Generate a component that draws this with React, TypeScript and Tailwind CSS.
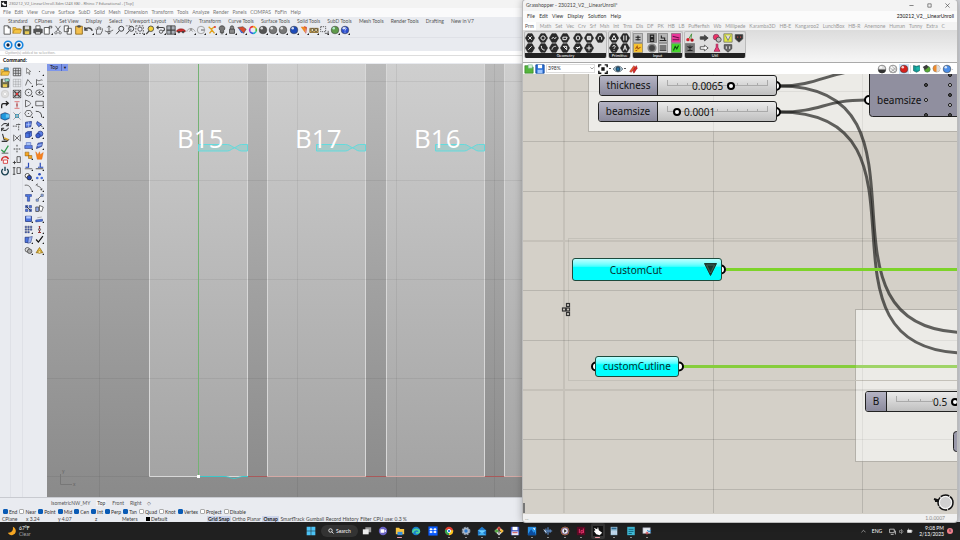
import React from 'react';
import clsx from 'clsx';

type Shape = React.ReactNode;

function Ico({ children, className = 'size-[10px]' }: { children: Shape; className?: string }) {
  return (
    <svg viewBox="0 0 12 12" className={clsx('block shrink-0', className)} fill="none" stroke="#444" strokeWidth="1" aria-hidden="true">
      {children}
    </svg>
  );
}

const corner = <path d="M12 9.500V12H9.500z" fill="#222" stroke="none" />;

function ball(fill: string, shine = '#fff'): Shape {
  return (
    <>
      <circle cx="6" cy="6" r="4.600" fill={fill} stroke="#333" strokeWidth=".6" />
      <circle cx="4.500" cy="4" r="1.500" fill={shine} stroke="none" opacity=".8" />
    </>
  );
}

const newDoc = <path d="M2.500 1h5l2.500 2.500V11h-7.500zM7.500 1v2.500H10" fill="#fff" />;
const folder = <path d="M1 10V3h3.500l1 1.500H10V6M1 10l2-4.500h8.500L10 10z" fill="#f5c443" stroke="#a87a1c" strokeWidth=".7" />;
const floppy = (
  <>
    <path d="M1.500 1.500h9v9.500h-9z" fill="#6b6b4a" stroke="#333" />
    <path d="M3.500 1.500h5v3.500h-5z" fill="#ddd" stroke="none" />
    <path d="M3.500 7.500h5V11h-5z" fill="#e8cb55" stroke="none" />
  </>
);
const printer = (
  <>
    <path d="M3.500 1h5v4h-5z" fill="#fff" />
    <path d="M1 5h10v4.500H1z" fill="#555" />
    <path d="M3 8h6v3H3z" fill="#ddd" />
  </>
);
const magnifier = <path d="M5 7 1.500 11M4.500 4.500a3 3 0 1 0 6 0a3 3 0 1 0-6 0" fill="#e8ecf4" strokeWidth="1.200" />;
const gridShape = <path d="M1.500 1.500h9v9h-9zM1.500 4.500h9M1.500 7.500h9M4.500 1.500v9M7.500 1.500v9" strokeWidth=".9" />;

const mainTools: Shape[] = [
  newDoc,
  folder,
  floppy,
  printer,
  <><path d="M1.500 3h6v8h-6z" fill="#fff" /><path d="M7.500 5V1.500h3M9 3.500h1.500v-2" />{corner}</>,
  <path d="M3 1l5 7M9 1L4 8M3.500 8a1.400 1.400 0 1 0 .1 0M8.500 8a1.400 1.400 0 1 0 .1 0" stroke="#555" />,
  <path d="M1.500 1h5v7h-5zM5 4h5v7H5z" fill="#fff" />,
  <><path d="M2 1.500h8V11H2z" fill="#f4c04e" stroke="#8a6514" /><path d="M4.500 1h3v1.500h-3z" fill="#666" /></>,
  <><path d="M1 6c2-3 7-4 9 1M1 2.500V6h3.500" strokeWidth="1.500" />{corner}</>,
  <path d="M3 11V6L2 4.500M4 6V2.500M6 5.500V1.500M8 6V2.500M10 7V4M3 11h5l2-4" strokeWidth=".9" />,
  <path d="M6 1v10M1 7c3 2 7 1 10-1M4 3l2-2 2 2M4 9l2 2 2-2" strokeWidth=".9" />,
  magnifier,
  <>{magnifier}<path d="M1 1h6v5" strokeDasharray="1 1" />{corner}</>,
  <><path d="M1 1h9v9H1z" strokeDasharray="2 1.500" /><circle cx="6" cy="5" r="2.500" fill="#eef" />{corner}</>,
  <><path d="M5 7 1.500 11" strokeWidth="1.500" /><circle cx="7" cy="4.500" r="3.300" fill="#f6d237" />{corner}</>,
  <><path d="M1 3h7c3 0 3 4 0 4M3 1 1 3l2 2" strokeWidth="1.300" /><circle cx="6" cy="8" r="2" />{corner}</>,
  <><path d="M1 1h10v10H1z" fill="#aab0b8" /><path d="M6 1v10M1 6h10" strokeWidth="1.500" />{corner}</>,
  <><path d="M1 7c1-3 9-3 10 0v1H1z" fill="#d32f2f" stroke="#8a1c1c" /><circle cx="3.500" cy="8.500" r="1" fill="#222" /><circle cx="8.500" cy="8.500" r="1" fill="#222" /></>,
  <><path d="M1 8c1-5 8-5 10 0M4 8c0-2 4-2 4 0" stroke="#999" /><circle cx="6" cy="5" r="1" fill="#888" stroke="#999" />{corner}</>,
  <><circle cx="6" cy="6" r="4.500" stroke="#999" /><path d="M6 6h4" />{corner}</>,
  <><path d="M2 2l3 3 4-3M3 10l3-4 3 4" stroke="#e2a31c" strokeWidth="1.600" /><circle cx="9.500" cy="2.500" r="1.200" fill="#d33" stroke="none" />{corner}</>,
  <><path d="M6 1a3 3 0 0 1 2 5.500V9H4V6.500A3 3 0 0 1 6 1z" fill="#777" /><path d="M4.500 10.500h3" />{corner}</>,
  <><path d="M3 5h6v5H3zM4 5V3a2 2 0 0 1 4 0v2" fill="#888" />{corner}</>,
  <><path d="M1 3l6-1 4 3-3 5z" fill="#d94d30" stroke="#333" strokeWidth=".6" /><path d="M1 3l7 7-3-.5z" fill="#3a62c8" stroke="none" />{corner}</>,
  <>
    <path d="M6 2a4 4 0 0 1 3.500 2" stroke="#f5a623" strokeWidth="2" /><path d="M9.500 4a4 4 0 0 1 0 4" stroke="#44c13c" strokeWidth="2" />
    <path d="M9.500 8A4 4 0 0 1 6 10" stroke="#21b7c9" strokeWidth="2" /><path d="M6 10a4 4 0 0 1-3.500-2" stroke="#3451e0" strokeWidth="2" />
    <path d="M2.500 8a4 4 0 0 1 0-4" stroke="#b731d8" strokeWidth="2" /><path d="M2.500 4A4 4 0 0 1 6 2" stroke="#e8362e" strokeWidth="2" />
  </>,
  <>{ball('#555')}{corner}</>,
  <>{ball('#777')}{corner}</>,
  <>{ball('#777')}{corner}</>,
  <>{ball('#1e4bb8')}{corner}</>,
  <><path d="M2 2h7l-2 7z" fill="#f08a24" stroke="none" /><path d="M6 2l3 1-1 7" stroke="#c33" />{corner}</>,
  <><path d="M1 4h10v5H1z" fill="#e0b04a" stroke="#6b4d13" strokeWidth=".8" /><circle cx="4" cy="6" r="1.800" fill="#f7e3a8" /><circle cx="8.500" cy="6" r="1.800" fill="#f7e3a8" />{corner}</>,
  <><path d="M2 2h6v6H2z" strokeDasharray="1.500 1" /><path d="M7 10h4V7" />{corner}</>,
  <>{ball('#5f9a4a', '#cfe')}{corner}</>,
  <>{ball('#2c4fd0')}<path d="M4.800 4.500c0-2 2.800-1.600 2.500 0-.1 1-1.300 1-1.300 2.200M6 8v1" stroke="#fff" />{corner}</>,
];

const blueBox = <path d="M2 4l3-2h5v6l-3 2H2zM2 4h5v6M7 4l3-2" fill="#4b74e0" stroke="#1c2f80" strokeWidth=".8" />;

const sideOne: Shape[] = [
  <>{folder}<path d="M5 1h5v3H5z" fill="#58b4e8" stroke="#246" strokeWidth=".6" /></>,
  <>{floppy}<path d="M6 1h5v3H6z" fill="#9ec" stroke="#345" strokeWidth=".6" /></>,
  <><circle cx="6" cy="6" r="4.500" fill="#ddd" stroke="#ccc" /><path d="M4.500 4.500l3 3M7.500 4.500l-3 3" stroke="#fff" /></>,
  <path d="M2 10V6.500C2 4 4 4 9 4M7 1.500 10 4 7 6.500" stroke="#222" strokeWidth="1.500" />,
  <><path d="M1 4l5-2 5 2v5l-5 2-5-2z" fill="#1f97dc" stroke="#125" strokeWidth=".7" /><path d="M7 4h4v4H7z" fill="#63c5f2" stroke="none" /></>,
  <path d="M2 5c1-4 7-4 8-1M10 7c-1 4-7 4-8 1M10 1v3.500H7M2 11V7.500h3" stroke="#222" strokeWidth="1.200" />,
  <><path d="M3 1l2 7h5l-2 2H2" stroke="#333" strokeWidth="1.300" /><path d="M5 6l5 2" stroke="#dca62b" strokeWidth="2" /></>,
  <><path d="M1.500 7 5 10l5-8" stroke="#2f9a4b" strokeWidth="1.500" /><path d="M2 11h8" stroke="#444" /></>,
  <><path d="M2 7c0-6 7-6 8-2" stroke="#d22f2f" strokeWidth="1.800" /><path d="M4 6h5v4H4z" fill="#fff" stroke="#d22f2f" /></>,
  <><path d="M3.500 3.500a4 4 0 1 0 5 0M6 1v5" stroke="#143c4c" strokeWidth="1.600" /></>,
];

const sideTwo: Shape[] = [
  gridShape,
  <g opacity=".3">{gridShape}</g>,
  <>{gridShape}<path d="M1.500 1.500l9 9M10.500 1.500l-9 9" stroke="#333" /><circle cx="6" cy="6" r="1.500" fill="#d33" stroke="none" /></>,
  <><path d="M3 2h6M3 10h6" stroke="#d66" /><path d="M6 3v6M5 6h2" stroke="#a33" /></>,
  <><path d="M2 2l8 8M10 2l-8 8" strokeDasharray="1.500 1" /><circle cx="6" cy="6" r="2" stroke="#2d9cc0" /></>,
  <path d="M1 5h6M8 2v9M5 3h5" strokeDasharray="2 1" />,
  <path d="M2 2v8M10 2v8M3 3l6 6M9 3 3 9" strokeWidth=".9" />,
  <path d="M6 1v3M6 8v3M2 6h8" strokeDasharray="2 1" strokeWidth="1.200" />,
  <><path d="M6 2h4v7H6z" /><path d="M1 9h4M3 7v4" stroke="#333" /></>,
  <><path d="M6 2h4v7H6z" /><path d="M1 2h3M2.500 2v8M1 10h3" stroke="#333" /></>,
];

const sideThree: Shape[] = [
  <path d="M3.500 1.500v7l2-1.500 1.500 3 1-.5L6.500 6.500 9 6z" fill="#fff" strokeWidth=".8" />,
  <><circle cx="6" cy="6" r=".8" fill="#444" stroke="none" />{corner}</>,
  <><path d="M2 10 5 2l5 6" />{corner}</>,
  <><path d="M2 2c4 4 6-1 8 1M2 10c2-4 6 0 8-2M2 2v8" />{corner}</>,
  <><circle cx="6" cy="6" r="4.500" /><circle cx="6" cy="6" r=".8" fill="#444" stroke="none" />{corner}</>,
  <><ellipse cx="6" cy="6" rx="5" ry="3.500" /><path d="M4 6h4M6 4v4" />{corner}</>,
  <><path d="M2 1.500c9 3 9 6 0 9z" />{corner}</>,
  <><path d="M1 3h10v6H1z" />{corner}</>,
  <><path d="M3.500 2h5L11 6l-2.500 4h-5L1 6z" /><circle cx="6" cy="6" r=".8" fill="#444" stroke="none" />{corner}</>,
  <><path d="M1 3c6 0 8 2 8 8" strokeWidth="1.400" />{corner}</>,
  <><path d="M2 3l8-1-1 7-7 1z" fill="#5c7fe6" stroke="#23367e" /><path d="M2.500 6.500l7-1M6 2.500V10" stroke="#cdf" strokeWidth=".7" />{corner}</>,
  <><path d="M3 2l6 4-4 3-3-4z" fill="#5c7fe6" stroke="#23367e" /><path d="M7 7l3 2" stroke="#222" />{corner}</>,
  <>{blueBox}{corner}</>,
  <><circle cx="7" cy="5" r="3.500" fill="#5c7fe6" stroke="#23367e" /><circle cx="4" cy="7.500" r="3" fill="#3b5fd0" stroke="#23367e" />{corner}</>,
  <><path d="M1 6h10v4H1z" fill="#5c7fe6" stroke="#23367e" strokeWidth=".7" /><path d="M3 2h6v4H3z" fill="#a9c3f7" stroke="#4460b8" strokeWidth=".7" />{corner}</>,
  <><path d="M4 3l6-1-1 5-7 3z" fill="#5c7fe6" stroke="#23367e" /><path d="M3 6l6-1" stroke="#cdf" />{corner}</>,
  <><path d="M1.500 1.500h5v5h-5zM6 6h4.500v4H6z" fill="#f5a623" stroke="#8a5a0d" strokeWidth=".7" />{corner}</>,
  <><path d="M1 1l3 4 2-4 1 4 4-3-2 9H3z" fill="#f58220" stroke="#e26a10" strokeWidth=".6" /></>,
  <><path d="M6 1v6H2" stroke="#2748b8" strokeWidth="1.600" /><path d="M1 9h10" />{corner}</>,
  <><path d="M7 1v6h4M4 7h2" stroke="#2748b8" strokeWidth="1.600" /><path d="M1 9h10" stroke="#222" />{corner}</>,
  <><circle cx="4.500" cy="5" r="3" fill="#fff" stroke="#222" /><circle cx="7" cy="7.500" r="3" fill="#2748b8" stroke="#222" />{corner}</>,
  <><circle cx="6" cy="3" r="1.800" fill="#2748b8" stroke="none" /><circle cx="3" cy="8" r="1.800" fill="#4b74e0" stroke="none" /><circle cx="9" cy="8" r="1.800" fill="#4b74e0" stroke="none" />{corner}</>,
  <><path d="M1 3c6-1 8 3 9 7" />{corner}</>,
  <><path d="M2 2c1 4 6 1 7 8M1 3l3-2M7 9l3-1" />{corner}</>,
  <path d="M2 2h8v2.500H7.500V11h-3V4.500H2z" fill="#4b74e0" stroke="#23367e" strokeWidth=".7" />,
  <><path d="M3 9l6-6" /><path d="M1.500 8h3v3h-3zM8 1.500h3v3H8z" fill="#8fa8ee" stroke="#456" strokeWidth=".7" />{corner}</>,
  <><path d="M2 2h3v3H2zM7 2h3v3H7zM2 7h3v3H2zM7 7h3v3H7z" fill="#4b74e0" stroke="#23367e" strokeWidth=".7" /><path d="M3 3l6 6" stroke="#222" /></>,
  <><path d="M1 4h4v6H1z" fill="#8fa8ee" /><path d="M6 2l5 2-2 6-3-1z" fill="#fff" /></>,
  <><path d="M2 3h8v7H2z" fill="#4b74e0" stroke="#23367e" /><path d="M3 3h6v3H3z" fill="#b5caff" stroke="none" />{corner}</>,
  <><path d="M1 8l9-1v2.500l-9 1z" fill="#4b74e0" stroke="#23367e" strokeWidth=".7" /><path d="M3 5l6-1" stroke="#999" />{corner}</>,
  <><path d="M1.500 1.500h2v2h-2zM5 1.500h2v2H5zM8.500 1.500h2v2h-2zM1.500 5h2v2h-2zM5 5h2v2H5zM8.500 5h2v2h-2zM1.500 8.500h2v2h-2zM5 8.500h2v2H5z" fill="#3b5fd0" stroke="#334" strokeWidth=".5" />{corner}</>,
  <><path d="M5 2h2M6 2v8M4 10h4" stroke="#933" strokeWidth="1.400" /><circle cx="6" cy="6" r="1.400" fill="#e8a0a0" />{corner}</>,
  <><path d="M1.500 3h5v7h-5z" fill="#4b74e0" stroke="#23367e" /><path d="M6 3l5-1-2 8-4 1z" fill="#9fb6f4" stroke="#23367e" strokeWidth=".7" />{corner}</>,
  <><path d="M1.500 6 4.500 9.500l6-8" stroke="#111" strokeWidth="1.600" />{corner}</>,
  <><circle cx="4.500" cy="5" r="3" fill="#ddd" /><circle cx="7.500" cy="7" r="3" fill="#aaa" />{corner}</>,
  <><path d="M1.500 9 6 2l4.500 7z" fill="#f3c83a" stroke="#8a6514" /><circle cx="6" cy="8" r="2" fill="#f8e08a" stroke="#8a6514" strokeWidth=".6" />{corner}</>,
];

const menus = ['File', 'Edit', 'View', 'Curve', 'Surface', 'SubD', 'Solid', 'Mesh', 'Dimension', 'Transform', 'Tools', 'Analyze', 'Render', 'Panels', 'COMPAS', 'FoFin', 'Help'];
const rhinoTabs = ['Standard', 'CPlanes', 'Set View', 'Display', 'Select', 'Viewport Layout', 'Visibility', 'Transform', 'Curve Tools', 'Surface Tools', 'Solid Tools', 'SubD Tools', 'Mesh Tools', 'Render Tools', 'Drafting', 'New in V7'];
const snaps: [string, boolean][] = [['End', true], ['Near', false], ['Point', true], ['Mid', true], ['Cen', true], ['Int', true], ['Perp', true], ['Tan', true], ['Quad', false], ['Knot', false], ['Vertex', true], ['Project', false], ['Disable', false]];

function RhinoHeader() {
  return (
    <header className="shrink-0 bg-[#e9ebf0] text-[5px] leading-[8px] text-[#666]">
      <div className="flex h-[8px] items-center gap-[2px] bg-[#f3f3f3] pl-px font-['Noto_Sans',sans-serif] text-[4px] text-[#777]">
        <svg viewBox="0 0 12 12" className="size-[6px]" aria-hidden="true">
          <path d="M0 0h12v12H0z" fill="#222" />
          <path d="M1 3l3 1 2-3v4l5 2-2 3-4-1-3-3z" fill="#fff" />
        </svg>
        <h1>230212_V2_LinearUnroll.3dm (243 KB) - Rhino 7 Educational - [Top]</h1>
      </div>
      <nav className="h-[9px] bg-[#fafafb] pl-[3px] leading-[9px]">
        <div className="flex w-[298px] justify-between text-[#777]">
          {menus.map((m) => <button key={m}>{m}</button>)}
        </div>
      </nav>
      <div className="flex h-[8px] items-center pl-[8px]">
        <div className="flex w-[466px] justify-between text-[#555]">
          {rhinoTabs.map((t) => <button key={t}>{t}</button>)}
        </div>
      </div>
      <div className="h-[12px] overflow-hidden pl-[2px]">
        <div className="flex w-[348px] justify-between">
          {mainTools.map((s, i) => <button key={i} aria-label={`Tool ${i + 1}`}><Ico>{s}</Ico></button>)}
        </div>
      </div>
      <div className="flex h-[14px] items-center gap-px border-t border-[#dfe1e7] pl-[3px]">
        {[0, 1].map((i) => (
          <button key={i} aria-label={`Plugin ${i + 1}`}>
            <Ico><circle cx="6" cy="6" r="4.500" fill="#fff" stroke="#1685e0" strokeWidth="2" /><circle cx="6" cy="6" r="2" fill="#13233f" stroke="none" /></Ico>
          </button>
        ))}
      </div>
      <div className="bg-white pl-[5px] text-[4px] leading-[4px] text-[#aaa]">Option(s) added to selection.</div>
      <label className="flex h-[8px] items-center border-t border-[#ddd] bg-white pl-[3px] font-bold text-black">
        Command:
        <input className="min-w-0 flex-1 bg-transparent outline-none" />
      </label>
    </header>
  );
}

function SideTools() {
  return (
    <aside className="flex w-[47px] shrink-0 gap-px bg-[#e9ebf0] pt-[3px]">
      {[sideOne, sideTwo].map((col, c) => (
        <div key={c} className="flex w-[11px] flex-col items-center gap-px border-r border-[#dfe1e7]">
          {col.map((s, i) => <button key={i} aria-label={`Side tool ${c}-${i}`}><Ico>{s}</Ico></button>)}
        </div>
      ))}
      <div className="grid h-[188px] grid-cols-2 content-between gap-x-[2px]">
        {sideThree.map((s, i) => <button key={i} aria-label={`Draw tool ${i}`}><Ico className="size-[9px]">{s}</Ico></button>)}
      </div>
    </aside>
  );
}

/* Board positions are in viewport pixels, measured from its top-left corner. */
const boards = [
  { name: 'B15', x: 102 },
  { name: 'B17', x: 220 },
  { name: 'B16', x: 339 },
];

function Viewport() {
  return (
    <main className="relative min-w-0 flex-1 overflow-hidden bg-linear-to-b from-[#bababa] to-[#8a8a8a]">
      <svg className="absolute inset-0 size-full" fill="none" aria-label="Top view">
        <defs>
          <linearGradient id="board" x1="0" y1="0" x2="0" y2="1">
            <stop offset="0" stopColor="#cfcfcf" />
            <stop offset="1" stopColor="#a4a4a4" />
          </linearGradient>
        </defs>
        {[102, 220, 339, 457].map((x) => (
          <g key={x}>
            <rect x={x} y="-2" width="99" height="414" fill="url(#board)" />
            <path d={`M${x + 0.5} 0V412.500H${x + 98.5}V0`} stroke="#d8d8d8" />
          </g>
        ))}
        <path d="M52.500 0V434M250.500 0V434M349.500 0V434M447.500 0V434M0 17.500H480M0 116.500H480M0 215.500H480M0 314.500H480M0 412.500H102" stroke="#000" opacity=".06" />
        <path d="M201 412.500h19M319 412.500h20M438 412.500h19" stroke="#a95a5a" />
        <path d="M220 412.500h99M339 412.500h99M457 412.500h23" stroke="#d4a9a5" />
        <path d="M151.500 0V412" stroke="#74b274" />
        <path d="M151 412.500h26c6 0 6 2 10 2s4-2 10-2h4" stroke="#3cc7c9" />
        <rect x="150" y="411" width="3" height="3" fill="#fff" />
        {boards.map((b) => (
          <g key={b.name}>
            <path d={`M${b.x + 49.5} 80.500h29c3 0 5 3 7 3s4-3 7-3h6v6.500h-6c-3 0-5-3-7-3s-4 3-7 3h-29z`} fill="#7fd0cc" fillOpacity=".45" stroke="#63dbdd" />
            <text x={b.x + 28} y="84" fill="#fff" fontSize="26" fontFamily='"Open Sans", "Noto Sans", sans-serif'>{b.name}</text>
          </g>
        ))}
        <path d="M13.500 410v10.500H25" stroke="#777" />
        <text x="15" y="409" fill="#666" fontSize="5">y</text>
        <text x="26" y="422" fill="#666" fontSize="5">x</text>
      </svg>
      <button className="absolute left-0 top-0 flex h-[7px] items-center gap-[3px] bg-[#7e96ea] pl-[3px] pr-px text-[5px] leading-[7px] text-[#111]">
        Top<span className="border-l border-[#556bb8] pl-px text-[4px]">▼</span>
      </button>
    </main>
  );
}

function RhinoFooter() {
  return (
    <footer className="shrink-0 bg-[#e9ebf0] text-[5px] leading-[6px] text-[#555]">
      <div className="flex h-[10px] items-center gap-[6px] border-t border-[#c8cad0] pl-[51px]">
        <button>IsometricNW_MY</button>
        <button className="bg-[#f3f4f7] px-px text-[#333]">Top</button>
        <button>Front</button>
        <button>Right</button>
        <button>◇</button>
      </div>
      <div className="flex h-[9px] items-center pl-[3px]">
        <div className="flex w-[243px] justify-between">
          {snaps.map(([name, on]) => (
            <label key={name} className="flex items-center gap-px text-[#333]">
              <input type="checkbox" defaultChecked={on} className="size-[5px] appearance-none rounded-[1px] border border-[#aaa] bg-white checked:border-[#0a5bb5] checked:bg-[#0a5bb5]" />
              {name}
            </label>
          ))}
        </div>
      </div>
      <div className="flex h-[6px] items-center text-[#444]">
        <span className="w-[26px] pl-[2px]">CPlane</span>
        <span className="w-[32px]">x 3.24</span>
        <span className="w-[37px]">y 4.07</span>
        <span className="w-[27px]">z</span>
        <span className="w-[24px]">Meters</span>
        <button className="flex w-[61px] items-center gap-px text-[#333]"><span className="size-[4px] bg-black" />Default</button>
        <div className="flex w-[200px] justify-between whitespace-nowrap">
          <button className="bg-[#cdd5ea] px-px font-bold text-[#222]">Grid Snap</button>
          <button>Ortho</button>
          <button>Planar</button>
          <button className="bg-[#cdd5ea] px-px font-bold text-[#222]">Osnap</button>
          <button>SmartTrack</button>
          <button>Gumball</button>
          <button>Record History</button>
          <button>Filter</button>
          <span>CPU use: 0.3 %</span>
        </div>
      </div>
    </footer>
  );
}

/* ---------- Grasshopper ---------- */

const ghMenus = ['File', 'Edit', 'View', 'Display', 'Solution', 'Help'];
const ghTabs = ['Prm', 'Math', 'Set', 'Vec', 'Crv', 'Srf', 'Msh', 'Int', 'Trns', 'Dis', 'DF', 'PK', 'HB', 'LB', 'Pufferfish', 'Wb', 'Millipede', 'Karamba3D', 'HB-E', 'Kangaroo2', 'LunchBox', 'HB-R', 'Anemone', 'Human', 'Tunny', 'Extra', 'C'];

function hex(glyph: string): Shape {
  return (
    <>
      <path d="M3.500.8h5L11.500 6l-3 5.200h-5L.5 6z" fill="#2b2b2b" stroke="#111" strokeWidth=".6" />
      <path d={glyph} stroke="#fff" strokeWidth="1.100" />
    </>
  );
}

function tile(bg: string, glyph: string, fg = '#222'): Shape {
  return (
    <>
      <path d="M.5.5h11v11H.5z" fill={bg} stroke="#666" strokeWidth=".7" />
      <path d={glyph} stroke={fg} strokeWidth="1.300" />
    </>
  );
}

const ribbon: { name: string; width: string; groups: Shape[][][] }[] = [
  {
    name: 'Geometry',
    width: 'w-[83px]',
    groups: [
      [[hex('M4 4l4 4M8 4 4 8')], [hex('M4 8l4-4')]],
      [
        [hex('M6 3.500a2.500 2.500 0 1 0 .1 0'), hex('M3.500 7c2-5 3 3 5-2'), hex('M3.500 5h5l-1 3h-4z')],
        [hex('M4 3.500c0 3 1 5 4 5'), hex('M3.500 8c1-4 3-4 5-4'), hex('M4 4h4v4z')],
      ],
      [
        [hex('M4 4.500l2-1 2 1v3l-2 1-2-1z'), hex('M4 4h4v4H4zM6 4v4M4 6h4'), hex('M4 8V5l2-1.500L8 5v3')],
        [hex('M3.500 5.500h5M4 8l4-4'), hex('M6 3v6M3 6h6')],
      ],
    ],
  },
  {
    name: 'Primitive',
    width: 'w-[23px]',
    groups: [[[hex('M6 3l2.500 5h-5z'), hex('M4.500 3v6M7.500 3v6')], [hex('M4.500 4.500c0-2 3-2 3 0 0 1-1.500 1-1.500 2.500M6 8.500v1'), hex('M4 9l2-6 2 6M5 7h2')]]],
  },
  {
    name: 'Input',
    width: 'w-[51px]',
    groups: [
      [[tile('#bdbdbd', 'M3 5h6M6 3v6M3 8h6')], [tile('#f7c331', 'M3 7l2-3 1 3 3-2M3 9h2', '#a85a10')]],
      [
        [tile('#999', 'M4 2.500h4v3H4zM4 7h4v3H4z'), tile('#b5b5b5', 'M4 3v3h4v3M2 9h8')],
        [<circle cx="6" cy="6" r="4.500" fill="#444" stroke="#888" strokeWidth="2" />, tile('#ccc', 'M2 3.500h8M2 6h8M2 8.500h8')],
      ],
      [[tile('#e8389a', 'M2 4l8 2M2 8h8', '#6a1048')], [tile('#44d62c', 'M3 9l2-5 2 3 2-4', '#0b4a10')]],
    ],
  },
  {
    name: 'Util',
    width: 'w-[62px]',
    groups: [
      [
        [<><path d="M4 8 8 1l-1 7" stroke="#3c8a2e" /><circle cx="3.500" cy="8" r="2" fill="#d8232e" stroke="none" /><circle cx="8.500" cy="8.500" r="2" fill="#b2121c" stroke="none" /></>],
        [tile('#777', 'M6 3v6M3 4l3 2 3-2M3 9h6')],
      ],
      [
        [<path d="M1.500 4.500h5V2.500L11 6 6.500 9.500v-2h-5z" fill="#444" />],
        [<path d="M1.500 4.500h5V2.500L11 6 6.500 9.500v-2h-5z" fill="#fff" />],
      ],
      [
        [<><circle cx="5" cy="5" r="3.500" fill="#e36" stroke="#846" /><circle cx="8" cy="8" r="3" fill="#bbb" /></>, <path d="M1 1h10v10H1zM3 3l3 6 3-6" fill="#dfe83c" stroke="#777" />, <><path d="M1.500 2h9v5L6 11 1.500 7z" fill="#333" /><path d="M4 5h1M7.500 5h1" stroke="#f55" strokeWidth="1.500" /></>],
        [<path d="M5 1v4L2.500 10h7L7 5V1" fill="#e83e78" stroke="#803" strokeWidth=".7" />, <><path d="M1.500 2h9v5L6 11 1.500 7z" fill="#666" /><path d="M4 4v3M8 4v3" stroke="#fff" /></>],
      ],
    ],
  },
];

const leftTools: Shape[] = [
  <><path d="M1 2h4l1 1.500h5V11H1z" fill="#55b53c" stroke="#2f7a1e" strokeWidth=".7" /><path d="M5 1h5v4H5z" fill="#dff4d8" stroke="#5a8" strokeWidth=".6" /></>,
  <><path d="M1 1h10v10H1z" fill="#2a6fd6" stroke="#174a96" /><path d="M3.500 1h5v4h-5z" fill="#fff" stroke="none" /><path d="M3 7h6v4H3z" fill="#9cc4ff" stroke="none" /></>,
];
const viewTools: Shape[] = [
  <><path d="M1 4V1h3M8 1h3v3M11 8v3H8M4 11H1V8" stroke="#111" strokeWidth="1.700" /><path d="M4 4h4v4H4z" fill="#111" stroke="none" /></>,
  <><path d="M.5 6C3 1.500 9 1.500 11.500 6 9 10.500 3 10.500.5 6z" fill="#cfe8f2" stroke="#345" /><circle cx="6" cy="6" r="2.500" fill="#1f6d9e" stroke="#123" /></>,
  <><path d="M2 9l5-7 2 2-5 6z" fill="#e8542c" stroke="#922" strokeWidth=".6" /><path d="M6 8l4-6 1 3-4 6z" fill="#e0242c" stroke="#811" strokeWidth=".6" /></>,
];
const displayTools: Shape[] = [
  <>{ball('#ddd')}<path d="M1.500 6.500h9a4.500 4.500 0 0 1-9 0" fill="#333" stroke="none" /></>,
  <>{ball('#eee')}<path d="M2 4l7 6M4 2l6 6M10 4l-7 6" stroke="#777" strokeWidth=".6" /></>,
  ball('#d8201c'),
];
const moreTools: Shape[] = [
  <><path d="M2 2l4 1 4-1v7l-4 2-4-2z" fill="#139a96" stroke="#064a48" strokeWidth=".7" /><circle cx="8" cy="6" r="2.500" fill="#19b5a8" stroke="none" /></>,
  <><circle cx="7" cy="7" r="4" fill="#5aa834" stroke="#365" strokeWidth=".6" /><path d="M1 4l5-3 3 3-5 4z" fill="#3c3c3c" stroke="none" /></>,
  <><circle cx="6" cy="6" r="4.800" fill="#f08a2a" stroke="#777" strokeWidth=".6" /><path d="M6 1.200a4.800 4.800 0 0 1 0 9.600z" fill="#ddd" stroke="none" /></>,
];

function GrasshopperHeader() {
  return (
    <header className="shrink-0 bg-[#f3f3f3] text-[5px] leading-[9px] text-[#333]">
      <div className="flex h-[11px] items-center pl-[3px] pr-[7px]">
        <h2 className="flex-1 text-[#444]">Grasshopper - 230212_V2__LinearUnroll*</h2>
        <div className="flex gap-[13px]">
          <button aria-label="Minimize"><Ico className="size-[5px]"><path d="M1 6h10" strokeWidth="1.500" /></Ico></button>
          <button aria-label="Maximize"><Ico className="size-[5px]"><path d="M2 2h8v8H2z" strokeWidth="1.500" /></Ico></button>
          <button aria-label="Close"><Ico className="size-[5px]"><path d="M1 1l10 10M11 1 1 11" strokeWidth="1.500" /></Ico></button>
        </div>
      </div>
      <nav className="flex h-[11px] items-center justify-between bg-[#fbfbfb] pl-[4px] pr-[3px]">
        <div className="flex w-[94px] justify-between">{ghMenus.map((m) => <button key={m}>{m}</button>)}</div>
        <button className="text-[#111]">230212_V2__LinearUnroll</button>
      </nav>
      <div className="flex h-[8px] items-center justify-between pr-[12px] leading-[8px] text-[#999]">
        {ghTabs.map((t, i) => <button key={t} className={clsx(i === 0 && 'bg-white px-[2px] text-[#555]')}>{t}</button>)}
      </div>
      <div className="flex h-[33px] items-start gap-px border-b border-[#aaa] bg-linear-to-b from-[#dcdcdc] to-[#f6f6f6] pl-px pt-px">
        {ribbon.map((p) => (
          <section key={p.name} className={clsx('flex h-[27px] flex-col overflow-hidden rounded-[2px] border-x border-t border-[#bbb] bg-[#dedede]', p.width)}>
            <div className="flex flex-1 items-center justify-between pr-px">
              {p.groups.map((rows, g) => (
                <div key={g} className="flex flex-col">
                  {rows.map((row, r) => (
                    <div key={r} className="flex gap-px">
                      {row.map((s, i) => <button key={i} aria-label={`${p.name} ${g}-${r}-${i}`}><Ico>{s}</Ico></button>)}
                    </div>
                  ))}
                </div>
              ))}
            </div>
            <h3 className="flex h-[5px] items-center justify-center bg-[#222] text-[4px] leading-[5px] text-white">{p.name}</h3>
          </section>
        ))}
      </div>
      <div className="flex h-[11px] items-center gap-px bg-white pl-px pr-[4px]">
        {leftTools.map((s, i) => <button key={i} aria-label={`File action ${i + 1}`}><Ico>{s}</Ico></button>)}
        <span className="relative mr-[2px] flex">
          <select aria-label="Zoom" className="h-[9px] w-[49px] appearance-none border border-[#ddd] bg-white pl-px text-[5px] leading-[7px] text-[#333]">
            <option>398%</option>
          </select>
          <Ico className="pointer-events-none absolute right-px top-[2px] size-[4px]"><path d="M1 4l5 5 5-5" strokeWidth="1.500" /></Ico>
        </span>
        <div className="flex flex-1 items-center gap-px">
          {viewTools.map((s, i) => (
            <React.Fragment key={i}>
              <button aria-label={`View action ${i + 1}`}><Ico>{s}</Ico></button>
              {i < 2 && <span className="mr-px h-px w-[2px] bg-[#555]" />}
            </React.Fragment>
          ))}
        </div>
        {displayTools.map((s, i) => <button key={i} aria-label={`Preview ${i + 1}`} className={clsx(i === 2 && 'bg-[#cfe4f7]')}><Ico>{s}</Ico></button>)}
        <span className="h-[8px] w-px bg-[#ddd]" />
        {moreTools.map((s, i) => <button key={i} aria-label={`Shading ${i + 1}`}><Ico className="size-[9px]">{s}</Ico></button>)}
        <button aria-label="Preview settings" className="flex items-center"><Ico>{ball('#4b8ee8')}</Ico><span>.</span></button>
      </div>
    </header>
  );
}

function Slider({ label, value, pos, className, nameClass, valueClass, ticks }: {
  label: string; value: string; pos: number; className: string; nameClass: string; valueClass: string; ticks: number[];
}) {
  return (
    <label className={clsx('absolute flex h-[21px] overflow-hidden rounded-[3px] border border-[#222] bg-linear-to-b from-[#ebebeb] to-[#bfbfbf] text-[10px] leading-[19px] text-[#111]', className)}>
      <span className={clsx('shrink-0 border-r border-[#222] bg-linear-to-b from-[#b5b4c4] to-[#8b8a9c] text-center', nameClass)}>{label}</span>
      <span className="relative mx-[8px] flex flex-1 items-center">
        <svg className="absolute inset-0 size-full overflow-visible" fill="none" stroke="#aaa" aria-hidden="true">
          <path d={`M1.500 9.500h${ticks[ticks.length - 1] - 1}`} />
          {ticks.map((x) => <path key={x} d={`M${x + 0.5} ${x === 1 || x === 101 ? 4 : 7}v${x === 1 || x === 101 ? 6 : 3}`} />)}
        </svg>
        <output className={clsx('absolute leading-[14px]', valueClass)}>{value}</output>
        <input
          type="range"
          aria-label={label}
          defaultValue={pos}
          className="relative w-full appearance-none bg-transparent [&::-webkit-slider-thumb]:size-[8px] [&::-webkit-slider-thumb]:appearance-none [&::-webkit-slider-thumb]:rounded-full [&::-webkit-slider-thumb]:border-2 [&::-webkit-slider-thumb]:border-black [&::-webkit-slider-thumb]:bg-white"
        />
      </span>
    </label>
  );
}

function Canvas() {
  const dots: [number, number, boolean][] = [[403, 11, true], [403, 26, false], [403, 41, true], [427, 1, true], [427, 11, false], [427, 21, true], [427, 31, false], [427, 41, true]];
  return (
    <div className="relative min-h-0 flex-1 overflow-hidden bg-[#d4d0c8] font-['Noto_Sans','Open_Sans',sans-serif]">
      <svg className="absolute inset-0 size-full" fill="none" aria-hidden="true">
        <rect x="65.500" y="-4" width="380" height="61.500" fill="#ecebe7" stroke="#b4b1aa" />
        <rect x="332.500" y="235.500" width="120" height="152" fill="#ecebe7" stroke="#b4b1aa" />
        <rect x="45.500" y="164.500" width="400" height="142" stroke="#c4c1b9" />
        <path d="M190.500 58V439M339.500 58V235M339.500 388V439M0 17.500H65M0 67.500H434M0 117.500H434M0 216.500H434M0 266.500H332M0 365.500H332M0 415.500H434" stroke="#000" opacity=".13" />
        <path d="M190.500 0V58M339.500 0V58M339.500 235V388M65 17.500H434M332 266.500H434M332 365.500H434" stroke="#000" opacity=".06" />
        <path d="M41 0V439M0 167H434M0 316H434" stroke="#000" strokeWidth="2" opacity=".07" />
        <path d="M160 292.500H434" stroke="#86cd3c" strokeWidth="3" />
        <path d="M333 292.500H434" stroke="#ecebe7" strokeWidth="3" opacity=".25" />
        <g stroke="#1c1c1a" strokeWidth="3" opacity=".68">
          <path d="M256 12C296 12 308-4 347-4" />
          <path d="M256 38C300 38 300 26 343 26" />
        </g>
        <path d="M256 12C428 12 272 258.500 444 258.500" stroke="#1c1c1a" strokeWidth="3" opacity=".68" />
        <path d="M256 38C428 38 272 279 444 279" stroke="#1c1c1a" strokeWidth="3" opacity=".68" />
        <path d="M203 195.500H434" stroke="#7dd32a" strokeWidth="3" />
        <g fill="#fff" stroke="#000" strokeWidth="2">
          <circle cx="253" cy="12" r="4" /><circle cx="253" cy="38" r="4" /><circle cx="346" cy="26" r="4" />
          <circle cx="198" cy="195.500" r="4" /><circle cx="73" cy="292.500" r="4" /><circle cx="156" cy="292.500" r="4" />
        </g>
        <rect x="346.500" y="-6" width="100" height="48.500" rx="3" fill="#908f9f" stroke="#222" />
        {dots.map(([x, y, dark]) => <circle key={`${x}-${y}`} cx={x} cy={y} r="1.500" fill={dark ? '#555' : '#ddd'} stroke="#111" />)}
        <g fill="#d4d0c8" stroke="#333" strokeWidth="1.200">
          <rect x="43.500" y="229.500" width="3" height="3" /><rect x="43.500" y="234" width="3" height="3" /><rect x="43.500" y="238.500" width="3" height="3" /><rect x="39.500" y="234" width="3" height="3" />
        </g>
        <path d="M411 425l6 2M413 425v3" stroke="#111" strokeWidth="2" />
        <circle cx="422.500" cy="428.500" r="7.500" fill="#d0d0d0" stroke="#111" strokeWidth="1.500" strokeDasharray="9 1" />
        <circle cx="422.500" cy="428.500" r="6" stroke="#fff" />
        <rect x="430.500" y="357.500" width="20" height="20" rx="3" fill="#9a99aa" stroke="#222" />
        <rect x="0" y="429" width="2" height="10" fill="#777" />
      </svg>

      <Slider label="thickness" value="0.0065" pos={65} className="left-[76px] top-[1px] w-[178px]" nameClass="w-[58px]" valueClass="left-[26px]" ticks={[1, 11, 21, 31, 41, 51, 61, 71, 81, 91, 101]} />
      <Slider label="beamsize" value="0.0001" pos={7} className="left-[75px] top-[27px] w-[179px]" nameClass="w-[59px]" valueClass="left-[18px]" ticks={[1, 51, 61, 71, 81, 91, 101]} />
      <span className="absolute left-[354px] top-[18px] text-[10px] leading-[16px] text-[#111]">beamsize</span>

      <select aria-label="CustomCut" className="absolute left-[49px] top-[184px] h-[23px] w-[150px] appearance-none rounded-[3px] border border-[#1d4a3c] bg-linear-to-b from-[#b9ffff] via-[#0ff] via-40% to-[#0ff] pl-0 pr-[22px] text-center text-[10px] leading-[20px] text-[#0b3030] [text-align-last:center]">
        <option>CustomCut</option>
      </select>
      <svg viewBox="0 0 13 13" className="pointer-events-none absolute left-[181px] top-[189px] size-[13px]" aria-hidden="true">
        <path d="M.5.5h12l-6 12z" fill="#16362c" stroke="#1d3a30" />
        <path d="M2.500 2h8l-4 8z" fill="none" stroke="#4a6b60" strokeWidth=".8" />
      </svg>
      <button className="absolute left-[72px] top-[282px] h-[21px] w-[84px] rounded-[3px] border border-[#1d4a3c] bg-linear-to-b from-[#b9ffff] via-[#0ff] via-40% to-[#0ff] text-[10px] leading-[19px] text-[#0b3030]">customCutline</button>

      <Slider label="B" value="0.5" pos={63} className="left-[342px] top-[317px] w-[136px]" nameClass="w-[21px]" valueClass="left-[38px]" ticks={[1, 13, 25, 37]} />
    </div>
  );
}

/* ---------- Taskbar ---------- */

const apps: { art: Shape; active?: boolean; open?: boolean }[] = [
  { art: <><path d="M4 1.500h7v6H4z" fill="#999" stroke="none" /><path d="M1 4h7v6H1z" fill="#eee" stroke="none" /></> },
  { art: <><circle cx="6" cy="6" r="5" fill="#6a63c4" stroke="none" /><path d="M3 4h4.500v4H3zM7.500 6l2-1.500v3z" fill="#fff" stroke="none" /></> },
  { art: <><path d="M1 2h4l1 1.500h5V10H1z" fill="#f6c343" stroke="none" /><path d="M3 7h6v4H3z" fill="#3a8fdc" stroke="none" /></>, active: true },
  { art: <><circle cx="6" cy="6" r="5" fill="#1a7fd0" stroke="none" /><path d="M2 8c1-5 8-5 8-1 0 1.500-3 1.500-4 .5" stroke="#4fd39a" strokeWidth="2.200" /></> },
  { art: <><path d="M.5.5h11v11H.5z" fill="#0a5cff" stroke="none" /><path d="M3.500 2.500 6 4 3.500 5.500 1.500 4zM8.500 2.500l2 1.500-2 1.500L6 4zM3.500 5.800 6 7.300 3.500 8.800 1.500 7.300zM8.500 5.800l2 1.500-2 1.500L6 7.300z" fill="#fff" stroke="none" /></> },
  { art: <><circle cx="6" cy="6" r="5" fill="#e23c2e" stroke="none" /><path d="M6 6 2 9a5 5 0 0 0 4 2zM6 6 1.500 4a5 5 0 0 0 1 5.500z" fill="#2fa84f" stroke="none" /><path d="M6 11a5 5 0 0 0 5-6H6z" fill="#f9c81e" stroke="none" /><circle cx="6" cy="6" r="2" fill="#2f7de8" stroke="#fff" /></>, open: true },
  { art: <><circle cx="6" cy="6" r="4" stroke="#8a97a8" strokeWidth="2.500" strokeDasharray="2.200 1" /><circle cx="6" cy="6" r="3" stroke="#aab6c6" strokeWidth="2" fill="#2e7bd0" /></>, open: true },
  { art: <><path d="M1 5l5-4 5 4v6H1z" fill="#1f78c8" stroke="none" /><path d="M1 5h10L6 9z" fill="#6fd0ff" stroke="none" /><path d="M1 11l4-3h2l4 3z" fill="#45b2f2" stroke="none" /></>, open: true },
  { art: <><path d="M6 .5 11.500 6 6 11.500.5 6z" fill="#ddd" stroke="none" /><path d="M6 .5 8.500 3 6 6 3.500 3z" fill="#e2483d" stroke="none" /><path d="M.5 6 3 3.500 6 6 3 8.500z" fill="#55a845" stroke="none" /><path d="M6 6l3-2.500L11.500 6 9 8.500z" fill="#f2b632" stroke="none" /><path d="M6 3v6M6 5l2 2" stroke="#222" /></>, open: true },
  { art: <><path d="M1 1h10v10H1z" fill="#3f55c0" stroke="none" /><path d="M3 1h6v4H3z" fill="#fff" stroke="none" /><path d="M2 6.500h8V11H2z" fill="#e9e9f8" stroke="none" /><path d="M3 8h6" stroke="#c33" /></>, open: true },
  { art: <><path d="M1 1h10v10H1z" fill="#2a93e8" stroke="none" /><path d="M1 10 5 4l3 4 1-1.500 2 4.500H1z" fill="#0b4d9e" stroke="none" /><path d="M7 2l3 1-1 2z" fill="#fff" stroke="none" /></>, open: true },
  { art: <><path d="M1 6h10M3.500 3v6M6 1.500v9M8.500 4v4" stroke="#5f93d4" strokeWidth="1.300" /><path d="M1 4l3 4" stroke="#eee" /></>, open: true },
  { art: <><circle cx="6" cy="6" r="4.800" fill="#222" stroke="#c9763f" /><circle cx="6" cy="6" r="3.800" fill="#eee" stroke="#6a4f9c" strokeWidth=".8" /><path d="M5 4l3 2-3 2z" fill="#222" stroke="none" /></>, open: true },
  { art: <><path d="M1 1h10v10H1z" fill="#5b0a24" stroke="none" /><path d="M4 3.500v5M6 8.500c4 0 3-4 0-3zM8.800 3v5.500" stroke="#ff3a78" /></>, open: true },
  { art: <><path d="M0 0h12v12H0z" fill="#111" stroke="none" /><path d="M1 2l4 2 1-3 1 4 4 3-3 3-4-1-3-4 2-1z" fill="#fff" stroke="none" /></>, active: true },
  { art: <><path d="M2 1h8v10H2z" fill="#9fc4da" stroke="none" /><path d="M3 2h6v2H3z" fill="#2a6a92" stroke="none" /><path d="M3.500 6v4M6 6v4M8.500 6v4" stroke="#eef" /></>, open: true },
  { art: <><path d="M1.500 1h9v10h-9z" fill="#3fb8d4" stroke="none" /><path d="M3 4h6M3 6.500h6M3 9h4" stroke="#0d5c74" /></>, open: true },
  { art: <><path d="M1 2h9v7H1z" fill="#e8edf2" stroke="#889" strokeWidth=".6" /><path d="M6 5l5 3M6 8l5-3" stroke="#2a8fd8" /><circle cx="6" cy="8.500" r="1.200" stroke="#d44" /></>, open: true },
];

function Taskbar() {
  return (
    <footer className="relative flex h-[18px] shrink-0 items-center bg-[#202020] text-[5px] leading-[6px] text-white">
      <button className="absolute left-[7px] flex items-center gap-[2px] text-left">
        <Ico className="size-[10px]"><path d="M7 1c5 2 5 9-1 10-2 .2-4-1-5-3 4 .5 7-2 6-7z" fill="#f5a623" stroke="none" /></Ico>
        <span>67°F<br /><span className="text-[#aaa]">Clear</span></span>
      </button>
      <div className="mx-auto flex items-center">
        <button aria-label="Start" className="mr-[5px]"><Ico className="size-[10px]"><path d="M.8.8h4.900v4.900H.8zM6.300.8h4.900v4.900H6.300zM.8 6.300h4.900v4.900H.8zM6.300 6.300h4.900v4.900H6.300z" fill="#4cc2f5" stroke="none" /></Ico></button>
        <button className="mr-[2px] flex h-[12px] w-[37px] items-center gap-[2px] rounded-full bg-[#333] pl-[7px]">
          <Ico className="size-[6px]"><path d="M7.500 7.500 11 11M8.500 5a3.500 3.500 0 1 0-7 0a3.500 3.500 0 1 0 7 0" stroke="#fff" strokeWidth="1.600" /></Ico>Search
        </button>
        <div className="flex w-[294px] justify-between">
          {apps.map((a, i) => (
            <button key={i} aria-label={`App ${i + 1}`} className={clsx('flex h-[16px] flex-col items-center justify-end gap-px rounded-[2px] px-[2px] pb-px', i === 14 && 'bg-[#363636]')}>
              <Ico className="size-[10px]">{a.art}</Ico>
              <span className={clsx('h-px rounded-full', a.active ? 'w-[5px] bg-[#f09aa4]' : a.open ? 'w-[2px] bg-[#999]' : 'w-[2px]')} />
            </button>
          ))}
        </div>
      </div>
      <div className="absolute right-[7px] flex items-center gap-[3px]">
        <Ico className="size-[5px]"><path d="M1 8l5-5 5 5" stroke="#ccc" strokeWidth="1.500" /></Ico>
        <span className="ml-[3px] mr-[4px]">ENG</span>
        <Ico className="size-[7px]"><path d="M1 2h8v6H1zM3 11h5M9 5h2v6" stroke="#ddd" strokeWidth="1.300" /></Ico>
        <Ico className="size-[5px]"><path d="M1 4h2l3-3v10L3 8H1zM8 3c2 2 2 4 0 6" stroke="#ccc" strokeWidth="1.300" /></Ico>
        <Ico className="size-[6px]"><path d="M1 4h8v5H1z" fill="#eee" stroke="#eee" /><path d="M3 1v4M10 6h2" stroke="#eee" /></Ico>
        <span className="ml-[3px] text-right">9:08 PM<br />2/13/2023</span>
        <span className="flex size-[6px] items-center justify-center rounded-full bg-[#f2808c] text-[4px] text-black">5</span>
      </div>
    </footer>
  );
}

export default function App() {
  return (
    <div className="flex h-screen flex-col overflow-hidden font-['Lato','Noto_Sans',sans-serif]">
      <div className="grid min-h-0 flex-1 grid-cols-[523fr_434fr_3px] bg-[#d3d5db]">
        <div className="flex min-h-0 min-w-0 flex-col overflow-hidden whitespace-nowrap">
          <RhinoHeader />
          <div className="flex min-h-0 flex-1 bg-[#e9ebf0] pt-px">
            <SideTools />
            <Viewport />
          </div>
          <RhinoFooter />
        </div>
        <div className="z-10 flex min-h-0 min-w-0 flex-col overflow-hidden whitespace-nowrap rounded-[3px] shadow-[0_0_0_1px_#bbb,0_0_8px_rgba(0,0,0,0.35)]">
          <GrasshopperHeader />
          <Canvas />
          <footer className="flex h-[8px] shrink-0 items-center justify-between bg-[#f0f0f0] pl-[2px] pr-[12px] text-[5px] leading-[8px] text-[#888]"><span>...</span><span>1.0.0007</span></footer>
        </div>
      </div>
      <Taskbar />
    </div>
  );
}
